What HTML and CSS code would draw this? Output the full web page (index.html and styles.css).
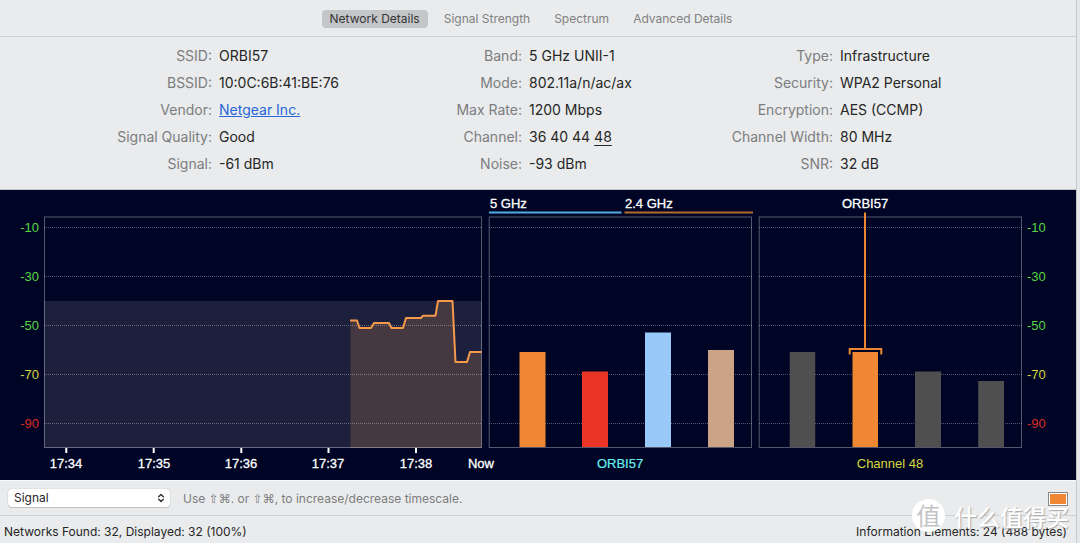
FILE: index.html
```html
<!DOCTYPE html>
<html lang="en">
<head>
<meta charset="utf-8">
<title>Network Details</title>
<link rel="stylesheet" href="styles.css">
</head>
<body>
<main class="window">
  <nav class="tabs">
    <button class="tab tab-active" type="button">Network Details</button>
    <button class="tab" type="button">Signal Strength</button>
    <button class="tab" type="button">Spectrum</button>
    <button class="tab" type="button">Advanced Details</button>
  </nav>

  <section class="details">
    <dl class="facts">
      <dt>SSID:</dt><dd>ORBI57</dd>
      <dt>BSSID:</dt><dd>10:0C:6B:41:BE:76</dd>
      <dt>Vendor:</dt><dd><a href="#vendor">Netgear Inc.</a></dd>
      <dt>Signal Quality:</dt><dd>Good</dd>
      <dt>Signal:</dt><dd>-61 dBm</dd>
    </dl>
    <dl class="facts">
      <dt>Band:</dt><dd>5 GHz UNII-1</dd>
      <dt>Mode:</dt><dd>802.11a/n/ac/ax</dd>
      <dt>Max Rate:</dt><dd>1200 Mbps</dd>
      <dt>Channel:</dt><dd>36 40 44 <span class="primary-channel">48</span></dd>
      <dt>Noise:</dt><dd>-93 dBm</dd>
    </dl>
    <dl class="facts">
      <dt>Type:</dt><dd>Infrastructure</dd>
      <dt>Security:</dt><dd>WPA2 Personal</dd>
      <dt>Encryption:</dt><dd>AES (CCMP)</dd>
      <dt>Channel Width:</dt><dd>80 MHz</dd>
      <dt>SNR:</dt><dd>32 dB</dd>
    </dl>
  </section>

  <section class="charts">
    <svg class="chart" viewBox="0 0 1076 290" role="img" aria-label="Signal charts">
      <!-- signal history -->
      <rect class="history-band" x="44" y="111" width="438" height="147"/>
      <path class="history-area" d="M350.5 258V130.5H357L359.500 138H371L374 133H389L391.500 138H403L406 128H421L423 125.700H435.500L438 111H452.500L455.500 172H467L470 162H481.500V258Z"/>
      <path class="grid" d="M44 37.500H482M44 86.500H482M44 135.500H482M44 184.500H482M44 233.500H482"/>
      <path class="grid" d="M489 37.500H752M489 86.500H752M489 135.500H752M489 184.500H752M489 233.500H752"/>
      <path class="grid" d="M759 37.500H1022M759 86.500H1022M759 135.500H1022M759 184.500H1022M759 233.500H1022"/>
      <path class="history-line" d="M350 130.500H357L359.500 138H371L374 133H389L391.500 138H403L406 128H421L423 125.700H435.500L438 111H452.500L455.500 172H467L470 162H481.500"/>
      <rect class="frame" x="44.500" y="27" width="437" height="230.500"/>
      <path class="ticks" d="M66.300 258V263M153.700 258V263M241.300 258V263M328.500 258V263M416 258V263"/>

      <!-- network bars -->
      <rect class="band-5" x="489" y="21.500" width="132.500" height="2"/>
      <rect class="band-24" x="624.500" y="21.500" width="128.500" height="2"/>
      <rect class="frame" x="489.200" y="27" width="262.300" height="230.500"/>
      <rect class="bar-orange" x="519.500" y="162" width="26" height="95"/>
      <rect class="bar-red" x="582" y="181.500" width="26" height="75.500"/>
      <rect class="bar-blue" x="645" y="142.500" width="26" height="114.500"/>
      <rect class="bar-tan" x="708" y="160" width="26" height="97"/>

      <!-- channel bars -->
      <rect class="frame" x="759.200" y="27" width="262.300" height="230.500"/>
      <rect class="bar-gray" x="789.700" y="162" width="25.500" height="95"/>
      <rect class="bar-orange" x="852.500" y="162" width="25.500" height="95"/>
      <rect class="bar-gray" x="915" y="181.500" width="26" height="75.500"/>
      <rect class="bar-gray" x="978.200" y="191" width="25.800" height="66"/>
      <path class="marker" d="M865 22.500V159M849.700 164.500V159H881.300V164.500"/>

      <g class="label label-end">
        <text class="good" x="39" y="42">-10</text>
        <text class="good" x="39" y="91">-30</text>
        <text class="good" x="39" y="140">-50</text>
        <text class="fair" x="39" y="189">-70</text>
        <text class="poor" x="39" y="238">-90</text>
      </g>
      <g class="label">
        <text class="good" x="1027" y="42">-10</text>
        <text class="good" x="1027" y="91">-30</text>
        <text class="good" x="1027" y="140">-50</text>
        <text class="fair" x="1027" y="189">-70</text>
        <text class="poor" x="1027" y="238">-90</text>
        <text class="strong" x="490" y="18">5 GHz</text>
        <text class="strong" x="625" y="18">2.4 GHz</text>
      </g>
      <g class="label label-middle">
        <text class="strong" x="66" y="278">17:34</text>
        <text class="strong" x="154" y="278">17:35</text>
        <text class="strong" x="241" y="278">17:36</text>
        <text class="strong" x="328" y="278">17:37</text>
        <text class="strong" x="416" y="278">17:38</text>
        <text class="strong" x="481" y="278">Now</text>
        <text class="strong" x="865" y="18">ORBI57</text>
        <text class="network" x="620" y="278">ORBI57</text>
        <text class="channel" x="890" y="278">Channel 48</text>
      </g>
    </svg>
  </section>

  <section class="controls">
    <div class="picker">
      <select class="picker-select" aria-label="Graph type"><option>Signal</option></select>
      <svg class="picker-arrows" viewBox="0 0 8 10" aria-hidden="true"><path d="M1.700 3.700L4 1.400L6.300 3.700M1.700 6.300L4 8.600L6.300 6.300"/></svg>
    </div>
    <p class="hint">Use <span class="keys">⇧⌘</span>. or <span class="keys">⇧⌘</span>, to increase/decrease timescale.</p>
    <input class="swatch" type="color" value="#f08733" aria-label="Network color">
  </section>

  <footer class="status">
    <span>Networks Found: 32, Displayed: 32 (100%)</span>
    <span>Information Elements: 24 (488 bytes)</span>
  </footer>

  <div class="watermark"><span class="watermark-badge">值</span><span class="watermark-name">什么值得买</span></div>
</main>
</body>
</html>
```
FILE: styles.css
```css
* {
  box-sizing: border-box;
}

body {
  margin: 0;
  background: #e6e7e9;
  font-family: Inter, "Liberation Sans", "DejaVu Sans", "Noto Sans CJK SC", sans-serif;
  color: #262626;
}

.window {
  position: relative;
  margin-right: 3px;
  border-right: 1px solid #c8c9cc;
  min-height: 100vh;
  background: #e9ebec;
}

.tabs {
  display: flex;
  justify-content: center;
  align-items: center;
  gap: 8px;
  height: 37px;
  padding: 2px 14px 0 0;
  border-bottom: 1px solid #d0d1d3;
}

.tab {
  height: 18px;
  padding: 0 8px;
  border: 0;
  border-radius: 4px;
  background: none;
  font: 12px/18px Inter, sans-serif;
  color: #808182;
}

.tab-active {
  background: #c5c6c8;
  color: #343536;
}

.details {
  display: grid;
  grid-template-columns: 310fr 311fr 425fr;
  height: 153px;
  padding: 5px 0 0 30px;
  border-bottom: 1px solid #c4c5c8;
}

.facts {
  display: grid;
  grid-template-columns: 182px 1fr;
  grid-auto-rows: 27px;
  column-gap: 7px;
  margin: 0;
  font-size: 14px;
  line-height: 27px;
  white-space: nowrap;
}

.facts dt {
  text-align: right;
  color: #7c7d7f;
}

.facts dd {
  margin: 0;
}

.facts a {
  color: #2867d8;
}

.primary-channel {
  text-decoration: underline;
  text-underline-offset: 3px;
}

.charts {
  background: #000525;
}

.chart {
  display: block;
  width: 100%;
}

.history-band {
  fill: #1c203d;
}

.history-area {
  fill: #463840;
}

.history-line {
  fill: none;
  stroke: #f59a4a;
  stroke-width: 2;
  stroke-linejoin: round;
}

.grid {
  fill: none;
  stroke: #fff;
  stroke-opacity: 0.32;
  stroke-dasharray: 1 1;
}

.frame {
  fill: none;
  stroke: #fff;
  stroke-opacity: 0.33;
}

.ticks {
  stroke: #fff;
  stroke-width: 2;
}

.band-5 {
  fill: #50aee2;
}

.band-24 {
  fill: #b26a2e;
}

.bar-orange {
  fill: #f08733;
}

.bar-red {
  fill: #ea3425;
}

.bar-blue {
  fill: #99c9f9;
}

.bar-tan {
  fill: #cba386;
}

.bar-gray {
  fill: #4f4f50;
}

.marker {
  fill: none;
  stroke: #ee8733;
  stroke-width: 2;
}

.label {
  font: 13px "Liberation Sans", Arial, sans-serif;
}

.label-end {
  text-anchor: end;
}

.label-middle {
  text-anchor: middle;
}

.strong {
  fill: #fff;
  stroke: #fff;
  stroke-width: 0.3;
}

.good {
  fill: #58d743;
}

.fair {
  fill: #d8d840;
}

.poor {
  fill: #d42b20;
}

.network {
  fill: #66eeee;
  stroke: #66eeee;
  stroke-width: 0.2;
}

.channel {
  fill: #d8d840;
}

.controls {
  display: flex;
  align-items: center;
  height: 36px;
  padding: 2px 8px 0;
  border-top: 1px solid #f8f8f9;
  border-bottom: 1px solid #d0d1d3;
}

.picker {
  display: grid;
  align-items: center;
  width: 162px;
  padding-bottom: 2px;
}

.picker-select {
  grid-area: 1 / 1;
  height: 18px;
  padding: 0 6px;
  border: 0;
  border-radius: 4px;
  appearance: none;
  background: #fff;
  box-shadow: 0 0 1px #9d9ea0, 0 1px 1px #c4c5c7;
  font: 12px/18px Inter, sans-serif;
  color: #262626;
}

.picker-arrows {
  grid-area: 1 / 1;
  justify-self: end;
  width: 8px;
  height: 10px;
  margin-right: 5px;
  fill: none;
  stroke: #303030;
  stroke-width: 1.4;
  stroke-linecap: round;
  stroke-linejoin: round;
  pointer-events: none;
}

.hint {
  margin: 0 auto 0 13px;
  font-size: 12px;
  line-height: 18px;
  color: #7c7d7f;
}

.keys {
  font-family: "DejaVu Sans", sans-serif;
}

.swatch {
  width: 20px;
  height: 14px;
  padding: 1px;
  border: 1px solid #858688;
  background: #fff;
}

.swatch::-webkit-color-swatch-wrapper {
  padding: 0;
}

.swatch::-webkit-color-swatch {
  border: 0;
}

.status {
  display: flex;
  justify-content: space-between;
  padding: 7px 9px 0 4px;
  font-size: 12px;
  line-height: 18px;
}

.watermark {
  position: absolute;
  right: 7px;
  bottom: 11px;
  display: flex;
  align-items: center;
  gap: 9px;
  font-family: "Noto Sans CJK SC", sans-serif;
  pointer-events: none;
}

.watermark-badge {
  width: 33px;
  height: 33px;
  border-radius: 50%;
  background: #fff;
  text-align: center;
  font-size: 24px;
  line-height: 31px;
  color: #c2c3c5;
}

.watermark-name {
  font-size: 23px;
  font-weight: 500;
  line-height: 30px;
  color: #fff;
  text-shadow: 1px 1px 1px #a9aaac;
}
```
